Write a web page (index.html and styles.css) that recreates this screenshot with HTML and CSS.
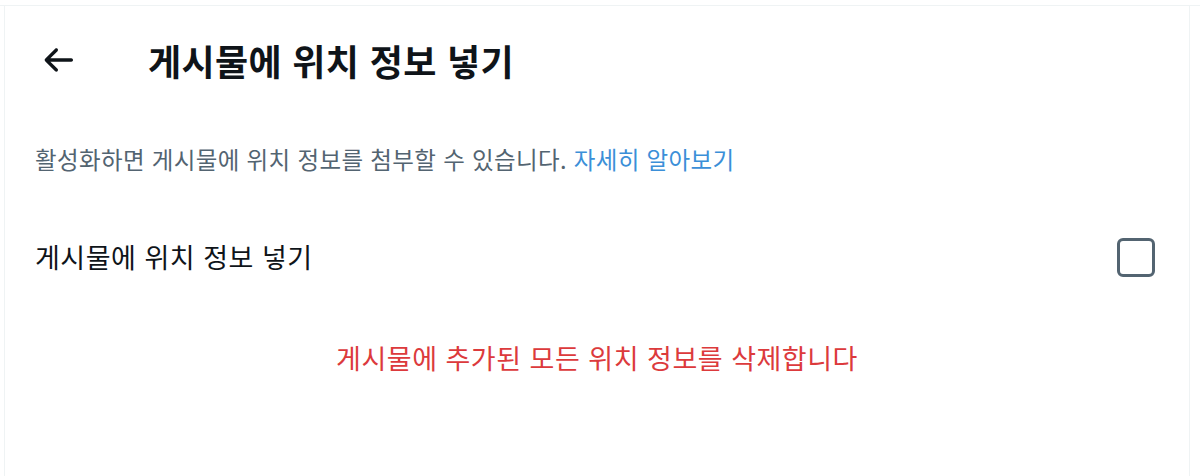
FILE: index.html
```html
<!DOCTYPE html>
<html lang="ko">
<head>
<meta charset="utf-8">
<title>게시물에 위치 정보 넣기</title>
<link rel="stylesheet" href="styles.css">
</head>
<body>
<div class="topline"></div>
<main class="panel">
  <header class="header">
    <button class="back" aria-label="뒤로">
      <svg viewBox="0 0 24 24" width="40" height="40"><path d="M20 11H7.414l4.293-4.293c.39-.39.39-1.023 0-1.414s-1.023-.39-1.414 0l-6 6c-.39.39-.39 1.023 0 1.414l6 6c.195.195.45.293.707.293s.512-.098.707-.293c.39-.39.39-1.023 0-1.414L7.414 13H20c.553 0 1-.447 1-1s-.447-1-1-1z"/></svg>
    </button>
    <h1 class="title">게시물에 위치 정보 넣기</h1>
  </header>
  <p class="desc">활성화하면 게시물에 위치 정보를 첨부할 수 있습니다. <a class="link" href="#">자세히 알아보기</a></p>
  <label class="row">
    <span class="label">게시물에 위치 정보 넣기</span>
    <span class="check"></span>
  </label>
  <div class="danger">게시물에 추가된 모든 위치 정보를 삭제합니다</div>
</main>
</body>
</html>
```
FILE: styles.css
```css
html, body {
  margin: 0;
  padding: 0;
  background: #ffffff;
  font-family: "Noto Sans CJK KR", "Noto Sans", sans-serif;
  color: #0f1419;
}
.topline {
  height: 5px;
  border-bottom: 1px solid #eff3f4;
}
.panel {
  margin-left: 4px;
  width: 1184px;
  height: 470px;
  border-left: 1px solid #eff3f4;
  border-right: 1px solid #eff3f4;
}
.header {
  height: 108px;
  display: flex;
  align-items: center;
}
.back {
  width: 40px;
  height: 40px;
  margin-left: 33px;
  padding: 0;
  border: 0;
  background: none;
  display: flex;
}
.back svg {
  fill: #0f1419;
}
.title {
  margin: 0 0 0 70px;
  font-size: 36px;
  font-weight: 700;
  line-height: 44px;
  letter-spacing: 0.35px;
}
.desc {
  margin: 29px 0 0;
  padding: 0 30px;
  font-size: 23.5px;
  line-height: 32px;
  letter-spacing: 0.35px;
  color: #536471;
}
.link {
  color: #3b8fd8;
  text-decoration: none;
}
.row {
  margin-top: 41px;
  height: 82px;
  padding: 0 34px 0 30px;
  display: flex;
  align-items: center;
  justify-content: space-between;
}
.label {
  font-size: 27px;
  line-height: 34px;
  letter-spacing: 0.5px;
}
.check {
  width: 32px;
  height: 33px;
  border: 3px solid #536471;
  border-radius: 6px;
}
.danger {
  margin-top: 29px;
  height: 60px;
  display: flex;
  align-items: center;
  justify-content: center;
  font-size: 27px;
  letter-spacing: 0.5px;
  color: #dc3a3c;
}
```
